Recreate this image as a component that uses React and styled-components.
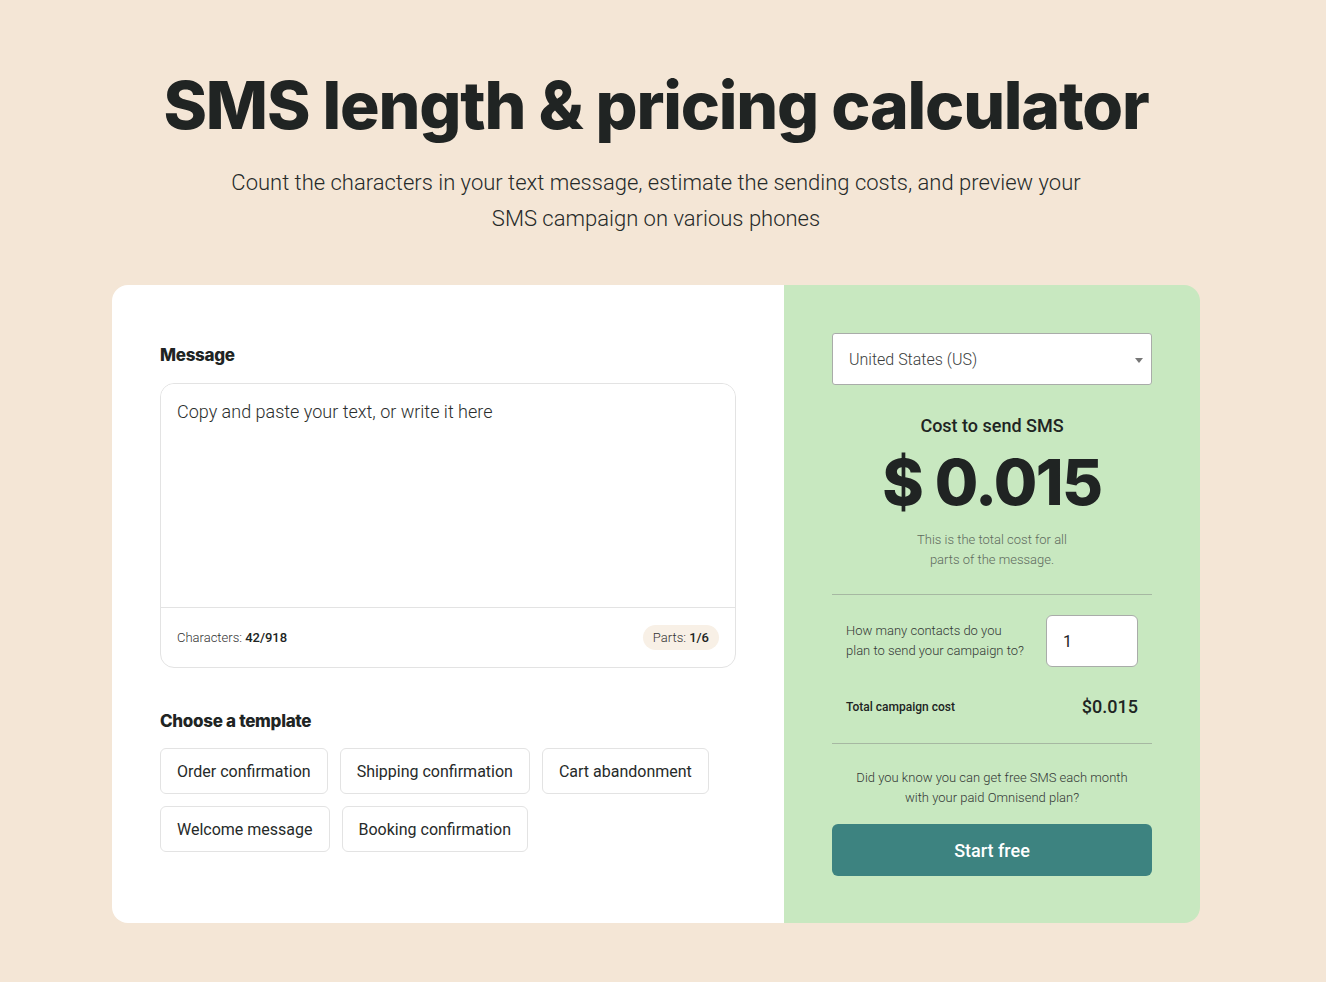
import React from "react";
import styled, { createGlobalStyle } from "styled-components";

const GlobalStyle = createGlobalStyle`
    * {
        box-sizing: border-box;
    }
    body {
        margin: 0;
        background-color: #f4e6d6;
        font-family: Roboto, "Liberation Sans", sans-serif;
        color: #212524;
    }
`;

const templates = [
    ["Order confirmation", "Shipping confirmation", "Cart abandonment"],
    ["Welcome message", "Booking confirmation"],
];

function App() {
    return (
        <Page>
            <GlobalStyle />
            <Header>
                <Title>SMS length &amp; pricing calculator</Title>
                <Lead>
                    Count the characters in your text message, estimate the sending costs, and preview your SMS
                    campaign on various phones
                </Lead>
            </Header>

            <Card>
                <Editor>
                    <Label>Message</Label>
                    <MessageBox>
                        <MessageInput placeholder="Copy and paste your text, or write it here" />
                        <MessageFooter>
                            <span>
                                Characters: <b>42/918</b>
                            </span>
                            <Pill>
                                Parts: <b>1/6</b>
                            </Pill>
                        </MessageFooter>
                    </MessageBox>

                    <Label className="templates">Choose a template</Label>
                    <TemplateList>
                        {templates.map((row, i) => (
                            <TemplateRow key={i}>
                                {row.map((name) => (
                                    <TemplateButton key={name}>{name}</TemplateButton>
                                ))}
                            </TemplateRow>
                        ))}
                    </TemplateList>
                </Editor>

                <Pricing>
                    <CountrySelect>
                        <span>United States (US)</span>
                        <Caret />
                    </CountrySelect>

                    <CostBlock>
                        <CostLabel>Cost to send SMS</CostLabel>
                        <CostValue>$ 0.015</CostValue>
                        <CostNote>This is the total cost for all parts of the message.</CostNote>
                    </CostBlock>

                    <Section>
                        <ContactsRow>
                            <SmallText>How many contacts do you plan to send your campaign to?</SmallText>
                            <ContactsInput defaultValue="1" />
                        </ContactsRow>
                        <TotalRow>
                            <span className="label">Total campaign cost</span>
                            <span className="value">$0.015</span>
                        </TotalRow>
                    </Section>

                    <Promo>
                        Did you know you can get free SMS each month
                        <br />
                        with your paid Omnisend plan?
                    </Promo>
                    <StartButton>Start free</StartButton>
                </Pricing>
            </Card>
        </Page>
    );
}

const Page = styled.div`
    min-height: 982px;
    padding: 69px 14px 57px 0;
`;

const Header = styled.div`
    display: flex;
    flex-direction: column;
    align-items: center;
    text-align: center;
`;

const Title = styled.h1`
    margin: 0;
    font-family: Inter, "Liberation Sans", sans-serif;
    font-weight: 800;
    font-size: 66px;
    line-height: 72px;
    letter-spacing: -1.2px;
    color: #202423;
`;

const Lead = styled.p`
    width: 870px;
    margin: 24px 0 0;
    font-size: 22px;
    font-weight: 300;
    line-height: 36px;
    color: #262a29;
`;

const Card = styled.div`
    width: 1088px;
    height: 638px;
    margin: 48px auto 0;
    display: grid;
    grid-template-columns: 672px 416px;
    border-radius: 16px;
    overflow: hidden;
`;

const Editor = styled.div`
    background-color: #ffffff;
    padding: 58px 48px 0;
`;

const Label = styled.h3`
    margin: 0 0 16px;
    font-family: Inter, "Liberation Sans", sans-serif;
    font-weight: 800;
    font-size: 17px;
    line-height: 24px;
    letter-spacing: -0.3px;
    color: #202423;
    &.templates {
        margin: 41px 0 15px;
    }
`;

const MessageBox = styled.div`
    height: 285px;
    display: flex;
    flex-direction: column;
    border: 1px solid #e3e3e3;
    border-radius: 14px;
`;

const MessageInput = styled.textarea`
    flex: 1;
    border: none;
    border-bottom: 1px solid #e3e3e3;
    border-radius: 14px 14px 0 0;
    resize: none;
    padding: 16px;
    font-family: Roboto, "Liberation Sans", sans-serif;
    font-size: 18px;
    font-weight: 300;
    line-height: 24px;
    outline: none;
    &::placeholder {
        color: #2b2e2d;
    }
`;

const MessageFooter = styled.div`
    height: 59px;
    display: flex;
    align-items: center;
    justify-content: space-between;
    padding: 0 16px;
    font-size: 13px;
    font-weight: 300;
    color: #333;
    b {
        font-weight: 500;
        color: #202423;
    }
`;

const Pill = styled.span`
    padding: 5px 10px;
    border-radius: 14px;
    background-color: #f8f0e6;
`;

const TemplateList = styled.div`
    display: flex;
    flex-direction: column;
    gap: 12px;
`;

const TemplateRow = styled.div`
    display: flex;
    gap: 12px;
`;

const TemplateButton = styled.button`
    height: 46px;
    padding: 0 16px;
    background: #ffffff;
    border: 1px solid #e3e3e3;
    border-radius: 6px;
    font-family: Roboto, "Liberation Sans", sans-serif;
    font-size: 16px;
    color: #262a29;
    cursor: pointer;
`;

const Pricing = styled.div`
    background-color: #c8e8c0;
    padding: 48px 48px 0;
    display: flex;
    flex-direction: column;
`;

const CountrySelect = styled.div`
    position: relative;
    height: 52px;
    display: flex;
    align-items: center;
    padding: 0 16px;
    background: #ffffff;
    border: 1px solid #a9aca9;
    border-radius: 3px;
    font-size: 16px;
    font-weight: 300;
    color: #3a3d3c;
`;

const Caret = styled.span`
    position: absolute;
    right: 8px;
    top: 24px;
    border-left: 4px solid transparent;
    border-right: 4px solid transparent;
    border-top: 5px solid #777;
`;

const CostBlock = styled.div`
    display: flex;
    flex-direction: column;
    align-items: center;
    text-align: center;
    padding: 29px 0 24px;
    border-bottom: 1px solid #a6b8a2;
`;

const CostLabel = styled.div`
    font-size: 18px;
    font-weight: 500;
    line-height: 24px;
    color: #202423;
`;

const CostValue = styled.div`
    margin-top: 6px;
    font-family: Inter, "Liberation Sans", sans-serif;
    font-weight: 800;
    font-size: 63px;
    line-height: 76px;
    letter-spacing: -1.5px;
    color: #202423;
`;

const CostNote = styled.div`
    width: 160px;
    margin-top: 10px;
    font-size: 13px;
    font-weight: 300;
    line-height: 20px;
    color: #5f6b5e;
`;

const Section = styled.div`
    padding: 20px 14px 26px;
    border-bottom: 1px solid #a6b8a2;
`;

const ContactsRow = styled.div`
    display: flex;
    align-items: center;
    justify-content: space-between;
`;

const SmallText = styled.div`
    width: 180px;
    font-size: 13px;
    font-weight: 300;
    line-height: 20px;
    color: #343836;
`;

const ContactsInput = styled.input`
    width: 92px;
    height: 52px;
    padding: 0 16px;
    border: 1px solid #a9aca9;
    border-radius: 6px;
    font-family: Roboto, "Liberation Sans", sans-serif;
    font-size: 16px;
    color: #202423;
    outline: none;
`;

const TotalRow = styled.div`
    display: flex;
    align-items: center;
    justify-content: space-between;
    margin-top: 29px;
    .label {
        font-size: 12px;
        font-weight: 500;
        color: #202423;
    }
    .value {
        font-size: 18px;
        font-weight: 500;
        color: #202423;
    }
`;

const Promo = styled.p`
    margin: 24px 0 16px;
    text-align: center;
    font-size: 13px;
    font-weight: 300;
    line-height: 20px;
    color: #343836;
`;

const StartButton = styled.button`
    height: 52px;
    border: none;
    border-radius: 6px;
    background-color: #3d8380;
    color: #ffffff;
    font-family: Roboto, "Liberation Sans", sans-serif;
    font-size: 18px;
    font-weight: 500;
    cursor: pointer;
`;

export default App;
